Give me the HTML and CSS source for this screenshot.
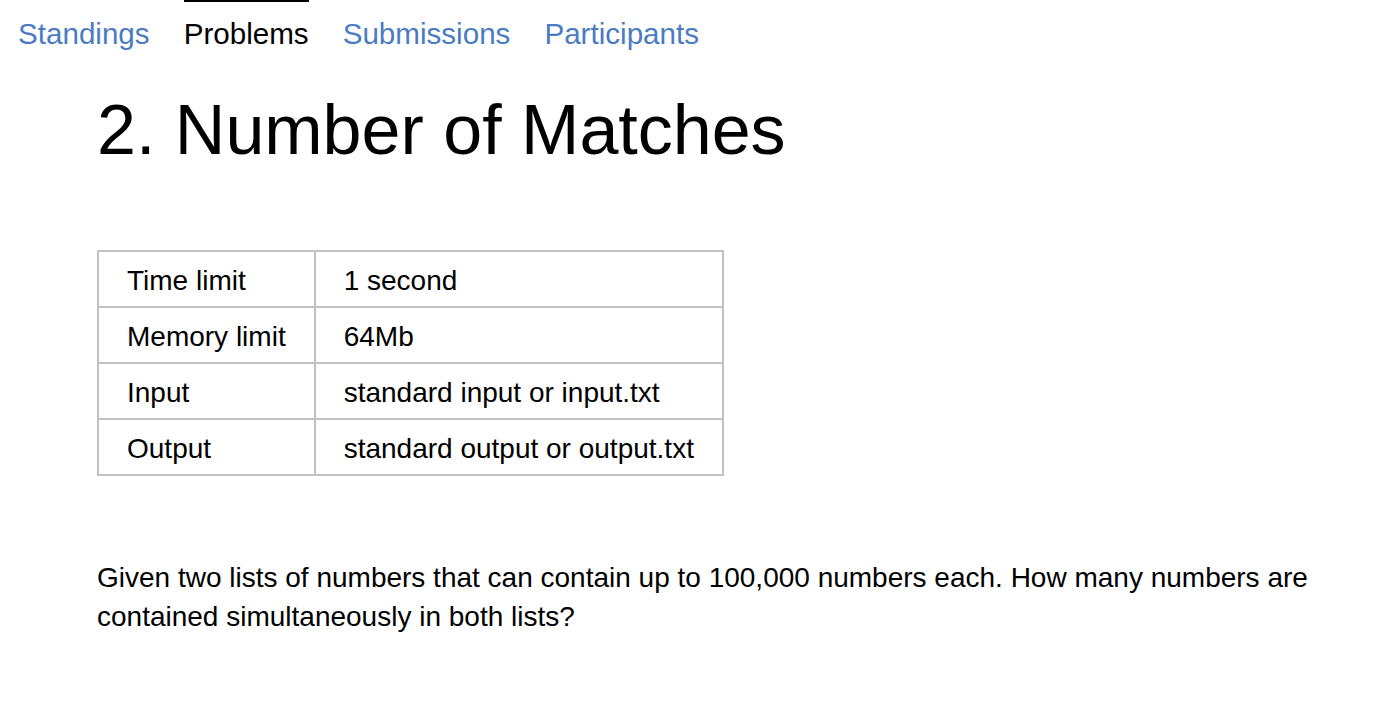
FILE: index.html
```html
<!DOCTYPE html>
<html>
<head>
<meta charset="utf-8">
<title>Number of Matches</title>
<link rel="stylesheet" href="styles.css">
</head>
<body>
<nav class="tabs">
  <a class="tab" href="#">Standings</a>
  <a class="tab active" href="#">Problems</a>
  <a class="tab" href="#">Submissions</a>
  <a class="tab" href="#">Participants</a>
</nav>
<main class="problem">
  <h1 class="title">2. Number of Matches</h1>
  <table class="limits">
    <tr><td>Time limit</td><td>1 second</td></tr>
    <tr><td>Memory limit</td><td>64Mb</td></tr>
    <tr><td>Input</td><td>standard input or input.txt</td></tr>
    <tr><td>Output</td><td>standard output or output.txt</td></tr>
  </table>
  <p class="statement">Given two lists of numbers that can contain up to 100,000 numbers each. How many numbers are contained simultaneously in both lists?</p>
</main>
</body>
</html>
```

FILE: styles.css
```css
html, body {
  margin: 0;
  padding: 0;
  background: #fff;
  color: #000;
  font-family: "Liberation Sans", Arial, sans-serif;
}

.tabs {
  display: flex;
  gap: 34px;
  padding-left: 18px;
}

.tab {
  font-size: 29.6px;
  line-height: 34px;
  padding: 15px 0 5px;
  border-top: 2px solid transparent;
  color: #4a7bc4;
  text-decoration: none;
}

.tab.active {
  color: #000;
  border-top-color: #000;
}

.problem {
  padding: 0 60px 0 97px;
}

.title {
  font-size: 70px;
  line-height: 80px;
  font-weight: normal;
  margin: 34px 0 80px;
}

.limits {
  border-collapse: collapse;
  border: 2px solid #c2c2c2;
  font-size: 28px;
  line-height: 32px;
}

.limits td {
  border: 2px solid #c2c2c2;
  padding: 13px 28px 9px 28px;
  white-space: nowrap;
}

.statement {
  font-size: 28px;
  line-height: 39px;
  margin: 82px 0 0;
}
```
